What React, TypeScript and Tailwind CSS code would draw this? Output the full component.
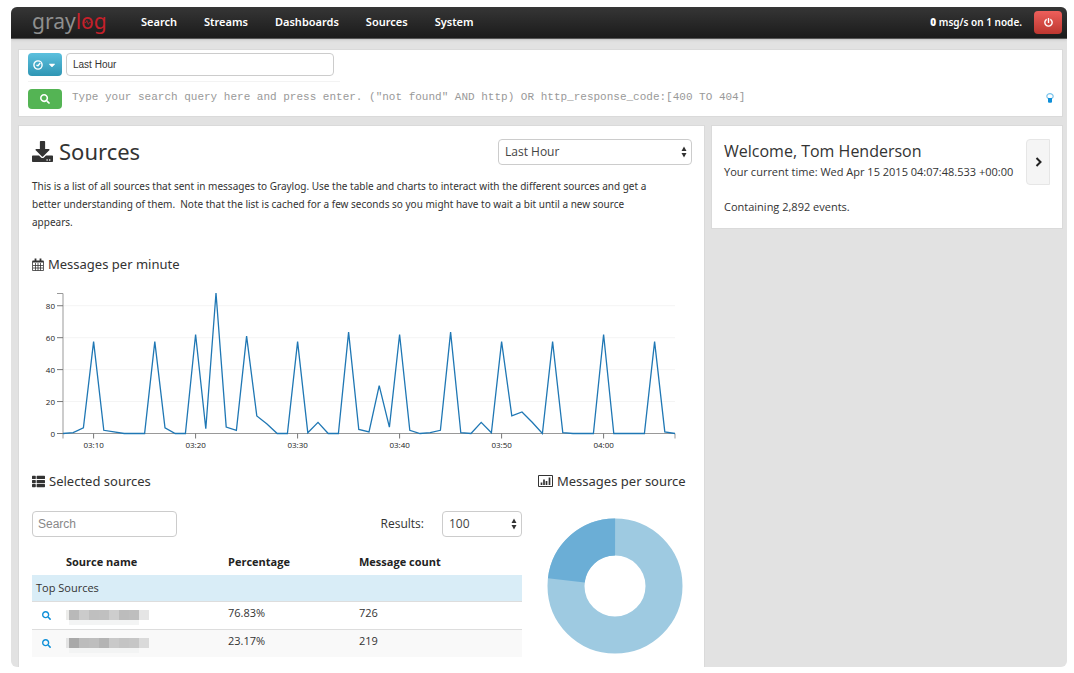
import { type ReactNode } from "react";
import { FaCaretDown, FaDownload, FaPowerOff, FaSearch, FaThList } from "react-icons/fa";

const NAV = ["Search", "Streams", "Dashboards", "Sources", "System"];

const MESSAGES = [
  0, 0.5, 3.5, 57.5, 2, 1, 0, 0, 0, 57.5, 3.5, 0, 0, 62, 3, 88, 4, 2, 61, 11, 6, 0, 0, 57.5, 0.5, 7, 0, 0, 63.5, 2.5, 1,
  30, 4, 62, 2, 0, 0.5, 2, 63.5, 0.5, 0, 7, 0.5, 57.5, 11, 13.5, 7, 0, 57.5, 0.5, 0, 0, 0, 62, 0, 0, 0, 0, 57.5, 1, 0,
];

const SOURCES = [
  { percentage: "76.83%", count: 726, shades: ["#ececea", "#b9b9b9", "#cbcbcb", "#bfbfbf", "#c0c0c0", "#cdcdcd", "#bcbcbc", "#bebebe", "#e5e5e5"] },
  { percentage: "23.17%", count: 219, shades: ["#e3e3e3", "#a9a9a9", "#bcbcbc", "#bebebe", "#b4b4b4", "#c9c9c9", "#c4c4c4", "#c6c6c6", "#dadada"] },
];

function Logo() {
  return (
    <a href="#" className="flex w-[109px] shrink-0 items-center pb-1 pl-[21px] font-['Noto_Sans'] text-[21px] leading-6 text-[#8f8f8f]">
      gray
      <span className="text-[#c5202a]">l</span>
      <span className="relative text-[#c5202a]">
        o
        <svg className="absolute inset-0 h-full w-full" viewBox="0 0 13 24" fill="none" stroke="#c5202a" aria-hidden="true">
          <path d="M3.500 13.500h1.500l1-2 1.500 4 1-2H10" strokeWidth=".8" />
        </svg>
      </span>
      <span className="text-[#c5202a]">g</span>
    </a>
  );
}

function ClockIcon() {
  return (
    <svg className="size-[10px]" viewBox="0 0 10 10" fill="none" stroke="currentColor" strokeWidth="1.4" aria-hidden="true">
      <circle cx="5" cy="5" r="4.1" />
      <path d="M7.2 3 5 5.6 3.4 5.2" />
    </svg>
  );
}

function BulbIcon() {
  return (
    <svg className="h-[10px] w-2" viewBox="0 0 8 10" fill="none" aria-hidden="true">
      <path d="M2.3 5.600C1.600 5.100.8 4.500.8 3.300A3.200 2.600 0 0 1 7.200 3.300C7.200 4.500 6.400 5.100 5.700 5.600Z" stroke="#7cc4ec" strokeWidth="1.200" />
      <path d="M2 5h4v4l-.7.800H2.700L2 9Z" fill="#0f8fd8" />
    </svg>
  );
}

function CalendarIcon() {
  return (
    <svg className="h-[13px] w-3 shrink-0" viewBox="0 0 12 13" fill="none" stroke="#333" aria-hidden="true">
      <path d="M.5 3.500h11v9H.5zM3.500 5v7.500M6 5v7.500M8.500 5v7.500M1 7.500h10M1 10h10" strokeWidth=".8" />
      <path d="M.5 3.500h11" strokeWidth="2" />
      <path d="M3.500.5v3M8.500.5v3" strokeWidth="1.800" />
    </svg>
  );
}

function BarChartIcon() {
  return (
    <svg className="h-3 w-[15px] shrink-0" viewBox="0 0 15 12" fill="none" stroke="#333" aria-hidden="true">
      <path d="M.5.5h14v11H.5z" />
      <path d="M3.500 10V7.500M6 10V4.500M8.500 10V6M11.500 10V2.500" strokeWidth="1.700" />
    </svg>
  );
}

function SortArrows() {
  return (
    <svg className="pointer-events-none absolute right-[5px] top-1/2 -mt-[6px] h-3 w-[6px]" viewBox="0 0 6 12" fill="#333" aria-hidden="true">
      <path d="M3 .5 5.500 5H.5ZM3 11.500 5.500 7H.5Z" />
    </svg>
  );
}

function Select({ id, label, value, className }: { id: string; label?: string; value: string; className: string }) {
  return (
    <div className={`relative ${className}`}>
      <select
        id={id}
        aria-label={label}
        className="block h-[26px] w-full appearance-none rounded border border-[#ccc] bg-white pl-[6px] text-xs text-[#444]"
      >
        <option>{value}</option>
      </select>
      <SortArrows />
    </div>
  );
}

function SectionTitle({ icon, children }: { icon: ReactNode; children: ReactNode }) {
  return (
    <h2 className="flex items-center gap-1 whitespace-nowrap font-['Noto_Sans'] text-[13px] leading-5 text-[#333]">
      {icon}
      {children}
    </h2>
  );
}

function MessagesChart() {
  const x = (minute: number) => 31 + minute * 10.2;
  const y = (value: number) => 145.5 - value * 1.597;
  const points = MESSAGES.map((value, minute) => `${x(minute)},${y(value)}`).join(" ");
  return (
    <svg className="block h-auto w-full" viewBox="0 0 660 168" role="img" aria-label="Messages per minute">
      {[20, 40, 60, 80].map((tick) => (
        <path key={tick} d={`M31 ${y(tick)}H643`} stroke="#f4f4f4" />
      ))}
      <path d="M25 5.500h6V145.500M25 145.500H643v5M31 145.500v5" fill="none" stroke="#999" />
      {[0, 20, 40, 60, 80].map((tick) => (
        <g key={tick}>
          <path d={`M25 ${y(tick)}h6`} stroke="#777" />
          <text x="23" y={y(tick) + 3} textAnchor="end" fontSize="8" fill="#222">
            {tick}
          </text>
        </g>
      ))}
      {["03:10", "03:20", "03:30", "03:40", "03:50", "04:00"].map((time, i) => (
        <g key={time}>
          <path d={`M${x(3 + i * 10)} 145.500v5`} stroke="#777" />
          <text x={x(3 + i * 10)} y="160" textAnchor="middle" fontSize="8" fill="#222">
            {time}
          </text>
        </g>
      ))}
      <polyline points={points} fill="none" stroke="#1f77b4" strokeWidth="1.300" />
    </svg>
  );
}

function Donut() {
  return (
    <svg className="mx-auto block size-[136px]" viewBox="-68 -68 136 136" role="img" aria-label="Messages per source">
      <circle r="49" fill="none" stroke="#9ecae1" strokeWidth="37" />
      <circle r="49" fill="none" stroke="#6baed6" strokeWidth="37" pathLength="100" strokeDasharray="23.170 76.830" transform="rotate(186.600)" />
    </svg>
  );
}

function RedactedName({ shades }: { shades: string[] }) {
  return (
    <svg className="block h-5 w-[84px]" viewBox="2 0 84 20" aria-hidden="true">
      <rect x="5" y="15" width="70" height="5" fill="#f3f4f4" />
      {shades.map((shade, i) => (
        <rect key={i} x={i === 0 ? 0 : i * 10 - 5} y="5" width={i === 0 ? 5 : 10} height="10" fill={shade} />
      ))}
    </svg>
  );
}

const PANEL = "border border-[#dadada] bg-white";

export default function App() {
  return (
    <div className="flex min-h-screen flex-col bg-white pb-[6px] pl-[11px] pr-[7px] pt-[7px] font-['Open_Sans',sans-serif] text-[#333]">
      <div className="flex grow flex-col overflow-hidden rounded-md bg-[#e2e2e2]">
        <header className="flex h-8 items-center border-b border-[#555] bg-linear-to-b from-[#363636] to-[#1b1b1b] pr-[5px] shadow">
          <Logo />
          <nav className="flex grow gap-[27px] pl-[21px] font-['Noto_Sans'] text-[11px] font-semibold text-white">
            {NAV.map((item) => (
              <a key={item} href="#">
                {item}
              </a>
            ))}
          </nav>
          <p className="mr-3 font-['Noto_Sans'] text-[10px] font-semibold text-white">
            <strong>0</strong> msg/s on 1 node.
          </p>
          <button aria-label="Sign out" className="flex h-[23px] w-7 items-center justify-center rounded-sm bg-linear-to-b from-[#ee5f5b] to-[#bd362f] text-[9px] text-white">
            <FaPowerOff />
          </button>
        </header>

        <main className="flex grow flex-col gap-2 pl-[7px] pr-1 pt-[10px]">
          <form className={`${PANEL} h-[68px] pl-[9px] pr-2 pt-[3px]`}>
            <div className="flex gap-1">
              <button type="button" aria-label="Time range" className="flex h-[23px] w-[34px] items-center justify-center gap-1 rounded bg-linear-to-b from-[#5bc0de] to-[#2f96b4] text-[10px] text-white">
                <ClockIcon />
                <FaCaretDown />
              </button>
              <input aria-label="Selected range" defaultValue="Last Hour" className="h-[23px] w-[268px] rounded border border-[#ccc] px-[6px] font-['Liberation_Sans'] text-[10px] text-[#333]" />
            </div>
            <div className="mt-[5px] w-[312px] border-t border-[#f3f3f3]" />
            <div className="mt-[7px] flex items-start">
              <button aria-label="Search" className="flex h-5 w-[34px] items-center justify-center rounded-sm bg-[#54b454] text-[10px] text-white">
                <FaSearch />
              </button>
              <input
                aria-label="Search query"
                placeholder={'Type your search query here and press enter. ("not found" AND http) OR http_response_code:[400 TO 404]'}
                className="ml-[10px] h-4 min-w-0 grow font-['Liberation_Mono'] text-[11px] placeholder:text-[#999]"
              />
              <a href="#" aria-label="Search help" className="mt-1">
                <BulbIcon />
              </a>
            </div>
          </form>

          <div className="grid grow grid-cols-[687fr_352fr] items-start gap-[6px]">
            <section className={`${PANEL} h-full border-b-0 pl-[13px] pr-3 pt-[13px]`}>
              <div className="flex items-center justify-between">
                <h1 className="flex items-center gap-[6px] pb-[2px] font-['Noto_Sans'] text-[22px] leading-6 text-[#333]">
                  <FaDownload className="size-[21px]" />
                  Sources
                </h1>
                <Select id="range" label="Chart range" value="Last Hour" className="w-[194px]" />
              </div>
              <p className="mt-3 pr-8 font-['Noto_Sans'] text-[10px] leading-[18px]">
                This is a list of all sources that sent in messages to Graylog. Use the table and charts to interact with the different
                sources and get a better understanding of them.&nbsp; Note that the list is cached for a few seconds so you might have to
                wait a bit until a new source appears.
              </p>
              <div className="mt-[23px]">
                <SectionTitle icon={<CalendarIcon />}>Messages per minute</SectionTitle>
              </div>
              <div className="mt-[14px]">
                <MessagesChart />
              </div>

              <div className="mt-[15px] grid grid-cols-[1fr_154px] gap-4">
                <div>
                  <SectionTitle icon={<FaThList className="size-[13px]" />}>Selected sources</SectionTitle>
                  <div className="mt-5 flex items-center">
                    <input aria-label="Search sources" placeholder="Search" className="h-[26px] w-[145px] rounded-sm border border-[#ccc] px-[5px] font-['Liberation_Sans'] text-xs placeholder:text-[#888]" />
                    <label htmlFor="results" className="ml-auto mr-[18px] text-xs">
                      Results:
                    </label>
                    <Select id="results" value="100" className="w-20" />
                  </div>
                  <table className="mt-3 w-full table-fixed text-left text-[11px]">
                    <thead>
                      <tr className="h-[26px] font-bold text-[#222]">
                        <th className="w-[34px]" />
                        <th className="w-[162px]">Source name</th>
                        <th className="w-[131px]">Percentage</th>
                        <th>Message count</th>
                      </tr>
                    </thead>
                    <tbody>
                      <tr className="h-[26px] bg-[#d9edf7]">
                        <td colSpan={4} className="pl-1">
                          Top Sources
                        </td>
                      </tr>
                      {SOURCES.map((source) => (
                        <tr key={source.count} className="h-7 border-t border-[#ddd] even:bg-white odd:bg-[#f9f9f9]">
                          <td className="pl-[10px]">
                            <a href="#" aria-label="Search this source" className="text-[9px] text-[#1090d8]">
                              <FaSearch />
                            </a>
                          </td>
                          <td>
                            <RedactedName shades={source.shades} />
                          </td>
                          <td className="pb-1">{source.percentage}</td>
                          <td className="pb-1">{source.count}</td>
                        </tr>
                      ))}
                    </tbody>
                  </table>
                </div>
                <div>
                  <SectionTitle icon={<BarChartIcon />}>Messages per source</SectionTitle>
                  <div className="mt-[27px]">
                    <Donut />
                  </div>
                </div>
              </div>
            </section>

            <aside className={`${PANEL} flex h-[104px] items-start justify-between pl-3 pr-3 pt-[13px]`}>
              <div className="text-[11px] leading-[18px]">
                <h2 className="text-base leading-6">Welcome, Tom Henderson</h2>
                <p>Your current time: Wed Apr 15 2015 04:07:48.533 +00:00</p>
                <p className="mt-[17px]">Containing 2,892 events.</p>
              </div>
              <button aria-label="Next" className="flex h-[46px] w-6 shrink-0 items-center justify-center rounded-l border border-[#e6e6e6] bg-[#f5f5f5]">
                <svg className="h-[10px] w-[7px]" viewBox="0 0 7 10" fill="none" stroke="#222" strokeWidth="2" aria-hidden="true">
                  <path d="M1.500 1 5.500 5 1.500 9" />
                </svg>
              </button>
            </aside>
          </div>
        </main>
      </div>
    </div>
  );
}
